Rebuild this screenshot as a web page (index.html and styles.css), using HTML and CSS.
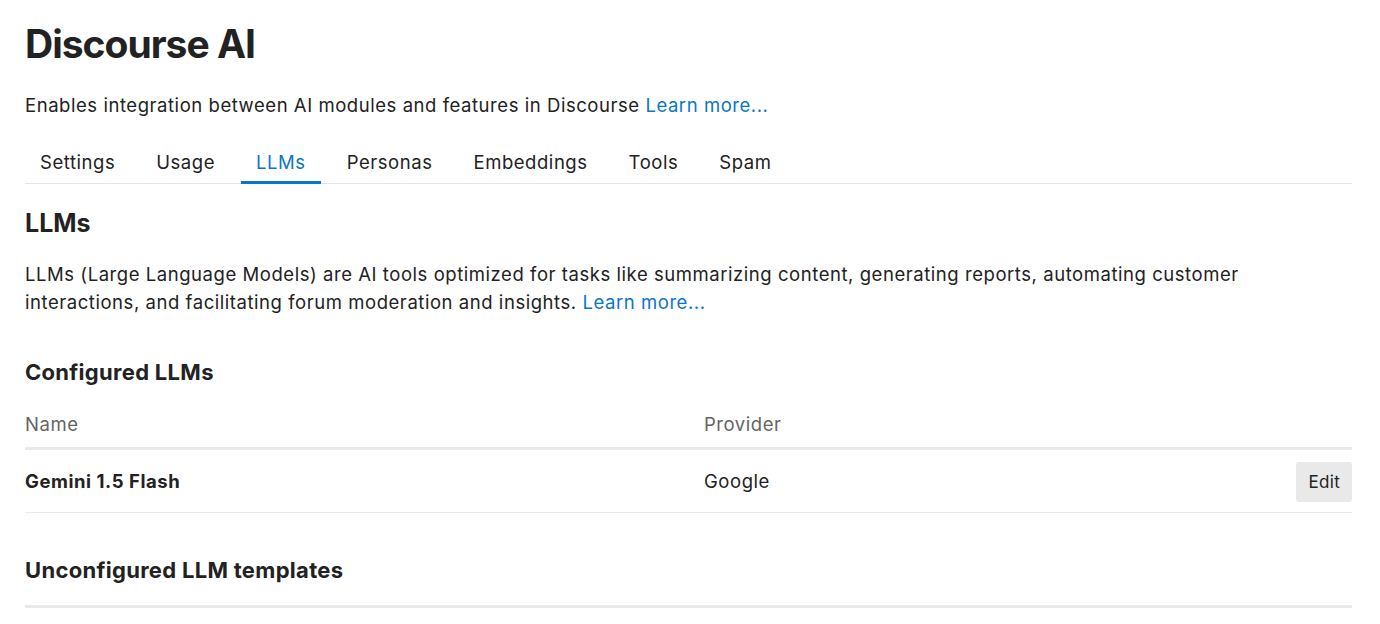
FILE: index.html
```html
<!DOCTYPE html>
<html lang="en">
<head>
    <meta charset="UTF-8">
    <title>Discourse AI</title>
    <meta name="viewport" content="width=device-width, initial-scale=1">
    <link rel="stylesheet" href="styles.css">
</head>
<body>
    <div class="admin">
        <h1 class="page-title">Discourse AI</h1>
        <p class="page-desc">Enables integration between AI modules and features in Discourse <a href="#">Learn more...</a></p>

        <nav class="tabs">
            <a href="#" class="tab">Settings</a>
            <a href="#" class="tab">Usage</a>
            <a href="#" class="tab active">LLMs</a>
            <a href="#" class="tab">Personas</a>
            <a href="#" class="tab">Embeddings</a>
            <a href="#" class="tab">Tools</a>
            <a href="#" class="tab">Spam</a>
        </nav>

        <h2 class="section-title">LLMs</h2>
        <p class="section-desc">LLMs (Large Language Models) are AI tools optimized for tasks like summarizing content, generating reports, automating customer interactions, and facilitating forum moderation and insights. <a href="#">Learn more...</a></p>

        <h3 class="sub-title">Configured LLMs</h3>
        <table class="llm-table">
            <thead>
                <tr>
                    <th class="col-name">Name</th>
                    <th>Provider</th>
                    <th></th>
                </tr>
            </thead>
            <tbody>
                <tr>
                    <td class="llm-name">Gemini 1.5 Flash</td>
                    <td>Google</td>
                    <td class="col-actions"><button class="btn">Edit</button></td>
                </tr>
            </tbody>
        </table>

        <h3 class="sub-title templates">Unconfigured LLM templates</h3>
        <div class="templates-line"></div>
    </div>
</body>
</html>
```

FILE: styles.css
```css
body {
    margin: 0;
    padding: 0;
    background: #fff;
    color: #222;
    font-family: Inter, 'Noto Sans', Arial, sans-serif;
    font-size: 18.5px;
    letter-spacing: 0.55px;
}
a {
    color: #0a76c8;
    text-decoration: none;
}
.admin {
    width: 1327px;
    padding: 20px 0 0 25px;
}
.page-title {
    margin: 0;
    font-size: 39px;
    font-weight: 700;
    line-height: 48px;
    letter-spacing: -1px;
}
.page-desc {
    margin: 24px 0 0 0;
    line-height: 26px;
}
.tabs {
    display: flex;
    gap: 11px;
    margin-top: 28px;
    border-bottom: 1px solid #e4e4e4;
}
.tab {
    color: #222;
    padding: 0 15px;
    line-height: 28px;
    height: 38px;
    box-sizing: border-box;
    padding-top: 2px;
    border-bottom: 3px solid transparent;
    margin-bottom: -1px;
}
.tab.active {
    color: #0a76c8;
    border-bottom-color: #0a76c8;
}
.section-title {
    margin: 23px 0 0 0;
    font-size: 25px;
    line-height: 32px;
    font-weight: 700;
    letter-spacing: 0;
}
.section-desc {
    margin: 21px 0 0 0;
    line-height: 28px;
}
.sub-title {
    margin: 41px 0 0 0;
    font-size: 22px;
    line-height: 30px;
    font-weight: 700;
    letter-spacing: 0.3px;
}
.llm-table {
    width: 100%;
    border-collapse: collapse;
    margin-top: 24px;
}
.llm-table th {
    text-align: left;
    font-weight: 400;
    color: #646464;
    padding: 0 0 10px 0;
    line-height: 26px;
    border-bottom: 3px solid #e9e9e9;
}
.llm-table th.col-name {
    width: 679px;
}
.llm-table td {
    padding: 10px 0;
    line-height: 40px;
    border-bottom: 1px solid #e9e9e9;
}
.llm-name {
    font-weight: 700;
}
.col-actions {
    text-align: right;
}
.btn {
    font-family: inherit;
    font-size: 17px;
    letter-spacing: 0.3px;
    color: #222;
    background: #e9e9e9;
    border: none;
    border-radius: 3px;
    height: 40px;
    padding: 0 12px;
    vertical-align: middle;
}
.templates {
    margin-top: 42px;
}
.templates-line {
    margin-top: 20px;
    height: 3px;
    background: #e9e9e9;
}
```
